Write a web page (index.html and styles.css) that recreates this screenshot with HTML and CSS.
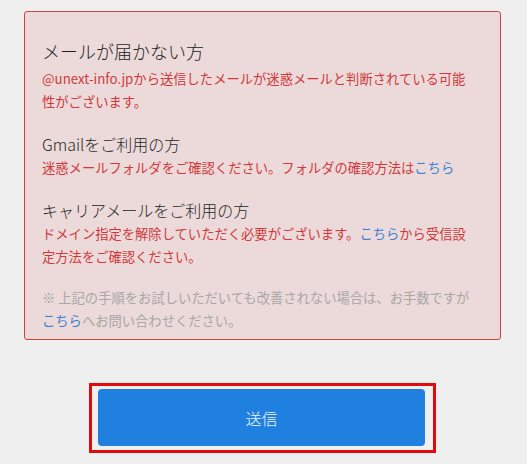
FILE: index.html
```html
<!DOCTYPE html>
<html lang="ja">
<head>
	<meta charset="UTF-8">
	<title>メールが届かない方</title>
	<link rel="stylesheet" href="styles.css">
</head>
<body>
	<div class="page">
		<div class="notice">
			<h2 class="notice_title">メールが届かない方</h2>
			<p class="notice_text">@unext-info.jpから送信したメールが迷惑メールと判断されている可能性がございます。</p>

			<div class="section">
				<h3 class="section_title">Gmailをご利用の方</h3>
				<p class="notice_text">迷惑メールフォルダをご確認ください。フォルダの確認方法は<a href="#">こちら</a></p>
			</div>

			<div class="section">
				<h3 class="section_title">キャリアメールをご利用の方</h3>
				<p class="notice_text">ドメイン指定を解除していただく必要がございます。<a href="#">こちら</a>から受信設定方法をご確認ください。</p>
			</div>

			<p class="note">※&nbsp;上記の手順をお試しいただいても改善されない場合は、お手数ですが<a href="#">こちら</a>へお問い合わせください。</p>
		</div>

		<div class="submit_wrap">
			<button class="btn_submit" type="button">送信</button>
		</div>
	</div>
</body>
</html>
```

FILE: styles.css
```css
*{
	margin: 0;
	padding: 0;
	box-sizing: border-box;
}
body{
	background-color: #fff;
	font-family: "Noto Sans CJK JP", "Noto Sans", sans-serif;
}
.page{
	padding: 11px 26px 11px 24px;
	background-color: #efefef;
}
.notice{
	padding: 25px 24px 7px 17px;
	border: 1px solid #c9473f;
	border-radius: 3px;
	background-color: #ecdada;
}
.notice_title{
	margin-bottom: 2px;
	color: #1e1e1e;
	font-size: 18px;
	font-weight: 300;
	line-height: 28px;
}
.notice_text{
	color: #d0393a;
	font-size: 13.3px;
	line-height: 23px;
}
.notice a,.note a{
	color: #3d82d2;
	text-decoration: none;
}
.section{
	margin-top: 20px;
}
.section_title{
	color: #262626;
	font-size: 16px;
	font-weight: 300;
	line-height: 23px;
}
.note{
	margin-top: 18px;
	color: #a9a6a6;
	font-size: 13.3px;
	line-height: 23px;
}
.submit_wrap{
	width: 347px;
	margin: 43px auto 0;
	padding: 3px 8px 4px 6px;
	border: 3px solid #e20a0a;
}
.btn_submit{
	display: block;
	width: 100%;
	height: 57px;
	border: none;
	border-radius: 4px;
	background-color: #1f80df;
	color: #f2f6fc;
	font-family: "Noto Sans CJK JP", sans-serif;
	font-size: 16px;
	font-weight: 300;
	cursor: pointer;
}
```
